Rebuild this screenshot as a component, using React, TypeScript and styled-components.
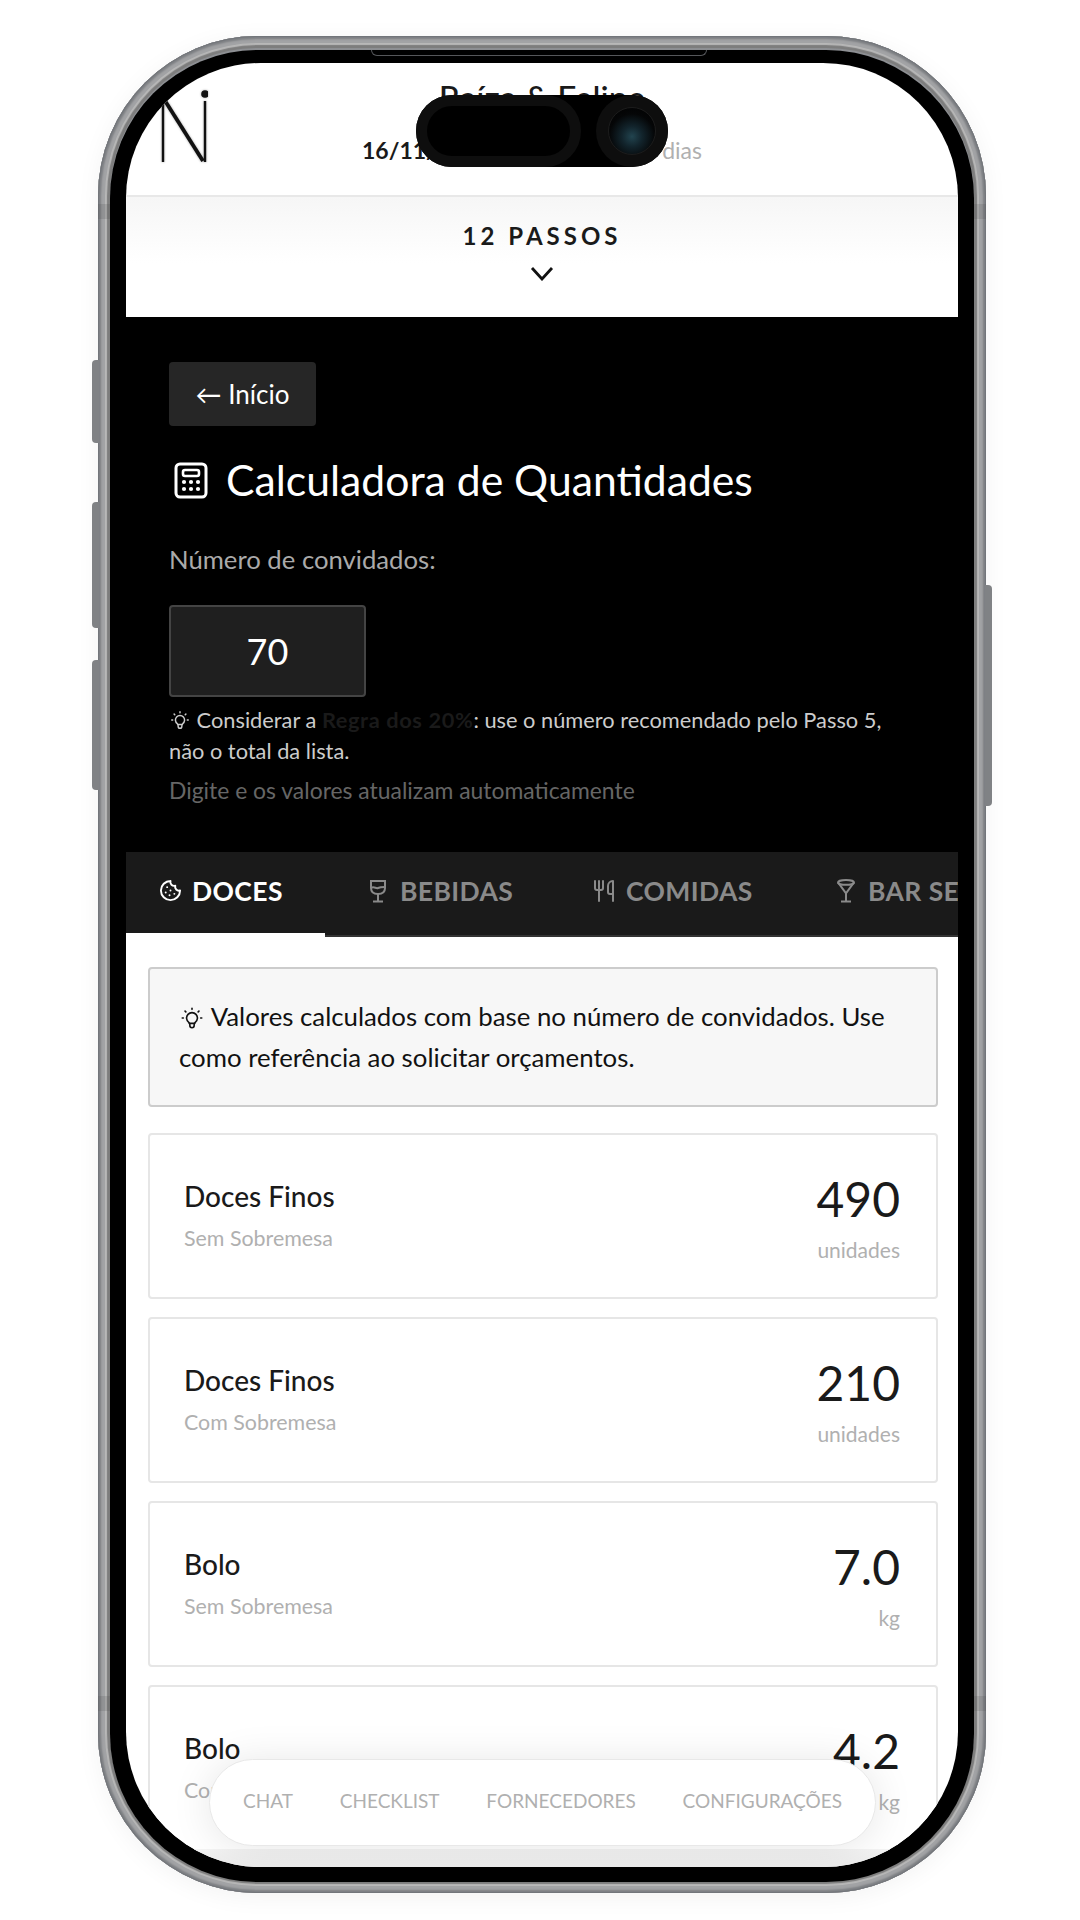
import React from 'react';
import styled, { createGlobalStyle } from 'styled-components';
import { Cookie, Utensils } from 'lucide-react';
import { TbBulb } from 'react-icons/tb';

const GlobalStyle = createGlobalStyle`
  html, body {
    margin: 0;
    padding: 0;
    background: #fff;
  }
  * {
    box-sizing: border-box;
  }
`;

const sideKeys = [
  { side: 'left', top: 360, height: 83 },
  { side: 'left', top: 502, height: 126 },
  { side: 'left', top: 660, height: 130 },
  { side: 'right', top: 585, height: 221 },
] as const;

const tabs = [
  { label: 'DOCES', icon: <Cookie size={23} strokeWidth={2} />, width: 208, active: true },
  { label: 'BEBIDAS', icon: <WineIcon />, width: 226 },
  { label: 'COMIDAS', icon: <Utensils size={24} strokeWidth={2} />, width: 242 },
  { label: 'BAR SERVICE', icon: <CocktailIcon />, width: 260 },
];

const quantities = [
  { name: 'Doces Finos', note: 'Sem Sobremesa', value: '490', unit: 'unidades' },
  { name: 'Doces Finos', note: 'Com Sobremesa', value: '210', unit: 'unidades' },
  { name: 'Bolo', note: 'Sem Sobremesa', value: '7.0', unit: 'kg' },
  { name: 'Bolo', note: 'Com Sobremesa', value: '4.2', unit: 'kg' },
];

const navItems = ['CHAT', 'CHECKLIST', 'FORNECEDORES', 'CONFIGURAÇÕES'];

function WineIcon() {
  return (
    <svg width="18" height="24" viewBox="0 0 18 24" fill="none" stroke="currentColor" strokeWidth="2">
      <path d="M2 2h14v7c0 4-3 6-7 6s-7-2-7-6z" />
      <path d="M2 9c3-2 5 1 7 0s4-1 7-1" />
      <path d="M9 15v7M4 22.5h10" />
    </svg>
  );
}

function CocktailIcon() {
  return (
    <svg width="20" height="24" viewBox="0 0 20 24" fill="none" stroke="currentColor" strokeWidth="2">
      <ellipse cx="10" cy="3.4" rx="8" ry="2.4" />
      <path d="M2 3.4l8 11 8-11M10 14.4v7.6M5 22.5h10" />
    </svg>
  );
}

function CalculatorIcon() {
  return (
    <svg width="34" height="37" viewBox="0 0 34 37" fill="none">
      <rect x="2" y="2" width="30" height="33" rx="4" stroke="#fff" strokeWidth="3" />
      <rect x="9" y="8" width="16" height="6" rx="2" stroke="#fff" strokeWidth="2.6" />
      {[10, 17, 24].map(x =>
        [20, 27].map(y => <circle key={`${x}-${y}`} cx={x} cy={y} r="2.1" fill="#fff" />),
      )}
    </svg>
  );
}

function LogoMark() {
  return (
    <svg width="50" height="74" viewBox="0 0 50 74" fill="none" stroke="#111">
      <path d="M5 10v64" strokeWidth="2.4" />
      <path d="M4 8l41 65" strokeWidth="3.8" />
      <path d="M47 13v61" strokeWidth="2.4" />
      <circle cx="47" cy="6" r="3.8" fill="#111" stroke="none" />
    </svg>
  );
}

export default function App() {
  return (
    <Stage>
      <GlobalStyle />
      <Phone>
        {sideKeys.map(key => (
          <SideKey key={key.top} $side={key.side} $top={key.top - 36} $height={key.height} />
        ))}
        <AntennaBand $top={168} />
        <AntennaBand $top={1660} />
        <Bezel>
          <Speaker />
          <Screen>
            <Header>
              <Logo>
                <LogoMark />
              </Logo>
              <Couple>Raíza &amp; Felipe</Couple>
              <DateRow>
                <DateText>16/11/2026</DateText>
                <DaysText>faltam 350 dias</DaysText>
              </DateRow>
            </Header>

            <StepsToggle>
              <StepsLabel>12 PASSOS</StepsLabel>
              <svg width="24" height="15" viewBox="0 0 24 15" fill="none" stroke="#111" strokeWidth="2.8">
                <path d="M2 2l10 11 10-11" />
              </svg>
            </StepsToggle>

            <DarkPanel>
              <BackButton>← Início</BackButton>
              <Title>
                <CalculatorIcon />
                Calculadora de Quantidades
              </Title>
              <FieldLabel>Número de convidados:</FieldLabel>
              <GuestInput readOnly value="70" />
              <Note>
                <TbBulb size={22} strokeWidth={1.6} /> Considerar a <Hidden>Regra dos 20%</Hidden>: use o
                número recomendado pelo Passo 5, não o total da lista.
              </Note>
              <Hint>Digite e os valores atualizam automaticamente</Hint>
            </DarkPanel>

            <TabBar>
              <TabStrip>
                {tabs.map(tab => (
                  <Tab key={tab.label} $active={!!tab.active} $width={tab.width}>
                    <TabIcon>{tab.icon}</TabIcon>
                    {tab.label}
                  </Tab>
                ))}
              </TabStrip>
            </TabBar>

            <Content>
              <TipBox>
                <TbBulb size={26} strokeWidth={1.5} /> Valores calculados com base no número de convidados.
                Use como referência ao solicitar orçamentos.
              </TipBox>
              {quantities.map(item => (
                <QuantityCard key={item.name + item.note}>
                  <div>
                    <ItemName>{item.name}</ItemName>
                    <ItemNote>{item.note}</ItemNote>
                  </div>
                  <Amount>
                    <AmountValue>{item.value}</AmountValue>
                    <AmountUnit>{item.unit}</AmountUnit>
                  </Amount>
                </QuantityCard>
              ))}
            </Content>

            <Island>
              <IslandPill />
              <IslandCamera>
                <Lens />
              </IslandCamera>
            </Island>

            <BottomFade />
            <PillNav>
              {navItems.map(item => (
                <NavItem key={item}>{item}</NavItem>
              ))}
            </PillNav>
          </Screen>
        </Bezel>
      </Phone>
    </Stage>
  );
}

const Stage = styled.div`
  width: 1080px;
  height: 1920px;
  padding: 36px 0 0 98px;
  display: flex;
  align-items: flex-start;
  background: #fff;
  overflow: hidden;
  font-family: Lato, 'Liberation Sans', sans-serif;
`;

const Phone = styled.div`
  position: relative;
  flex: none;
  width: 888px;
  height: 1857px;
  padding: 14px 12px 11px;
  border-radius: 160px;
  background: #8d8f93;
  box-shadow:
    inset 0 0 0 1px #73767b,
    inset 0 0 2px 3px #7d7f83,
    inset 0 0 0 7px #a2a3a5,
    inset 0 0 1px 9px #b8b8b8,
    inset 0 0 0 12px #7d7d7d,
    0 4px 24px rgba(0, 0, 0, 0.05);
`;

const SideKey = styled.div<{ $side: 'left' | 'right'; $top: number; $height: number }>`
  position: absolute;
  top: ${p => p.$top}px;
  ${p => p.$side}: -6px;
  width: 7px;
  height: ${p => p.$height}px;
  background: #808285;
  border-radius: ${p => (p.$side === 'left' ? '4px 0 0 4px' : '0 4px 4px 0')};
`;

const AntennaBand = styled.div<{ $top: number }>`
  position: absolute;
  top: ${p => p.$top}px;
  left: 0;
  right: 0;
  height: 15px;
  border-left: 12px solid rgba(70, 70, 70, 0.18);
  border-right: 12px solid rgba(70, 70, 70, 0.18);
`;

const Bezel = styled.div`
  position: relative;
  height: 100%;
  padding: 13px 16px 15px;
  border-radius: 148px;
  background: #000;
`;

const Speaker = styled.div`
  position: absolute;
  top: 0;
  left: 261px;
  width: 336px;
  height: 6px;
  border: 1px solid #55575a;
  border-top: none;
  border-radius: 0 0 14px 14px;
`;

const Screen = styled.div`
  position: relative;
  height: 100%;
  display: flex;
  flex-direction: column;
  overflow: hidden;
  border-radius: 135px;
  background: #fff;
`;

const Header = styled.header`
  position: relative;
  flex: none;
  height: 134px;
  display: flex;
  flex-direction: column;
  align-items: center;
  border-bottom: 2px solid #e8e8e8;
`;

const Logo = styled.div`
  position: absolute;
  top: 25px;
  left: 32px;
  line-height: 0;
  filter: drop-shadow(0 0 1px rgba(0, 0, 0, 0.35));
`;

const Couple = styled.div`
  margin-top: 14px;
  font-size: 33.5px;
  font-weight: 500;
  line-height: 40px;
  color: #1a1a1a;
`;

const DateRow = styled.div`
  margin-top: 17px;
  margin-right: 20px;
  width: 340px;
  display: flex;
  justify-content: space-between;
  align-items: baseline;
  font-size: 23px;
  line-height: 32px;
`;

const DateText = styled.span`
  font-weight: 700;
  color: #1a1a1a;
`;

const DaysText = styled.span`
  color: #b0b0b0;
`;

const StepsToggle = styled.div`
  flex: none;
  height: 120px;
  padding-top: 24px;
  display: flex;
  flex-direction: column;
  align-items: center;
  gap: 15px;
  background: linear-gradient(#f6f6f6, #fff 55%);
`;

const StepsLabel = styled.div`
  font-size: 24px;
  font-weight: 700;
  line-height: 30px;
  letter-spacing: 4px;
  color: #1a1a1a;
`;

const DarkPanel = styled.section`
  flex: none;
  height: 535px;
  padding: 45px 43px 0;
  background: #000;
`;

const BackButton = styled.div`
  width: 147px;
  height: 64px;
  display: flex;
  align-items: center;
  justify-content: center;
  border-radius: 4px;
  background: #262626;
  font-size: 26px;
  color: #fff;
`;

const Title = styled.h1`
  margin: 26px 0 0;
  padding-left: 5px;
  display: flex;
  align-items: center;
  gap: 18px;
  font-size: 42.7px;
  font-weight: 400;
  line-height: 56px;
  color: #fff;
`;

const FieldLabel = styled.div`
  margin-top: 33px;
  font-size: 25.7px;
  line-height: 36px;
  color: #aaa;
`;

const GuestInput = styled.input`
  display: block;
  margin-top: 28px;
  width: 197px;
  height: 92px;
  border: 2px solid #444;
  border-radius: 4px;
  outline: none;
  background: #1f1f1f;
  text-align: center;
  font-family: inherit;
  font-size: 36px;
  color: #fff;
`;

const Note = styled.p`
  margin: 7px 0 0;
  width: 730px;
  font-size: 21.8px;
  line-height: 31px;
  color: #ccc;

  svg {
    vertical-align: -3px;
  }
`;

const Hidden = styled.strong`
  letter-spacing: 0.6px;
  color: #1a1a1a;
`;

const Hint = styled.div`
  margin-top: 8px;
  font-size: 22.9px;
  line-height: 32px;
  color: #666;
`;

const TabBar = styled.nav`
  flex: none;
  height: 85px;
  overflow: hidden;
  background: #1a1a1a;
`;

const TabStrip = styled.div`
  height: 100%;
  margin-left: -9px;
  display: flex;
`;

const Tab = styled.div<{ $active: boolean; $width: number }>`
  flex: none;
  width: ${p => p.$width}px;
  padding: 0 0 ${p => (p.$active ? 4 : 6)}px 41px;
  display: flex;
  align-items: center;
  gap: 10px;
  border-bottom: ${p => (p.$active ? '4px solid #fff' : '2px solid #333')};
  font-size: 26.5px;
  font-weight: 700;
  letter-spacing: 0.4px;
  white-space: nowrap;
  color: ${p => (p.$active ? '#fff' : '#8a8a8a')};
`;

const TabIcon = styled.span`
  flex: none;
  width: 24px;
  display: flex;
  justify-content: center;
`;

const Content = styled.main`
  padding: 30px 20px 30px 22px;
  display: flex;
  flex-direction: column;
  gap: 18px;
`;

const TipBox = styled.div`
  margin-bottom: 8px;
  padding: 27px 29px;
  border: 2px solid #ccc;
  border-radius: 4px;
  background: #f7f7f7;
  font-size: 25.8px;
  line-height: 41px;
  color: #111;

  svg {
    vertical-align: -5px;
  }
`;

const QuantityCard = styled.article`
  flex: none;
  height: 166px;
  padding: 0 36px 0 34px;
  display: flex;
  align-items: center;
  justify-content: space-between;
  border: 2px solid #e6e6e6;
  border-radius: 4px;
  background: #fff;
`;

const ItemName = styled.div`
  margin-top: -3px;
  font-size: 28px;
  font-weight: 500;
  line-height: 36px;
  color: #1a1a1a;
`;

const ItemNote = styled.div`
  margin-top: 10px;
  font-size: 21.4px;
  line-height: 28px;
  color: #b0b0b0;
`;

const Amount = styled.div`
  text-align: right;
`;

const AmountValue = styled.div`
  margin-top: 1px;
  font-size: 48px;
  font-weight: 400;
  line-height: 58px;
  color: #1a1a1a;
`;

const AmountUnit = styled.div`
  margin-top: 8px;
  font-size: 21px;
  line-height: 28px;
  color: #b0b0b0;
`;

const Island = styled.div`
  position: absolute;
  top: 32px;
  left: 290px;
  width: 252px;
  height: 72px;
  border-radius: 36px;
  background: #000;
`;

const IslandPill = styled.div`
  position: absolute;
  top: 0;
  left: 0;
  width: 165px;
  height: 72px;
  border: 11px solid #0e0e0e;
  border-radius: 36px;
  background: #000;
`;

const IslandCamera = styled.div`
  position: absolute;
  top: 0;
  right: 0;
  width: 72px;
  height: 72px;
  display: flex;
  align-items: center;
  justify-content: center;
  border-radius: 50%;
  background: #0e0e0e;
`;

const Lens = styled.div`
  width: 48px;
  height: 48px;
  border-radius: 50%;
  border: 1px solid #1c1c1c;
  background: radial-gradient(circle at 50% 62%, #22444f 0%, #12242c 28%, #050607 62%, #000 100%);
`;

const BottomFade = styled.div`
  position: absolute;
  left: 0;
  right: 0;
  bottom: 0;
  height: 18px;
  pointer-events: none;
  background: linear-gradient(#f4f4f4, #ececec);
`;

const PillNav = styled.nav`
  position: absolute;
  left: 83px;
  bottom: 21px;
  width: 667px;
  height: 87px;
  padding: 0 33px 5px;
  display: flex;
  align-items: center;
  justify-content: space-between;
  border: 1px solid #e8e8e8;
  border-radius: 44px;
  background: #fff;
  box-shadow: 0 2px 40px rgba(0, 0, 0, 0.1);
`;

const NavItem = styled.span`
  font-size: 19px;
  color: #b0b0b0;
  white-space: nowrap;
`;
